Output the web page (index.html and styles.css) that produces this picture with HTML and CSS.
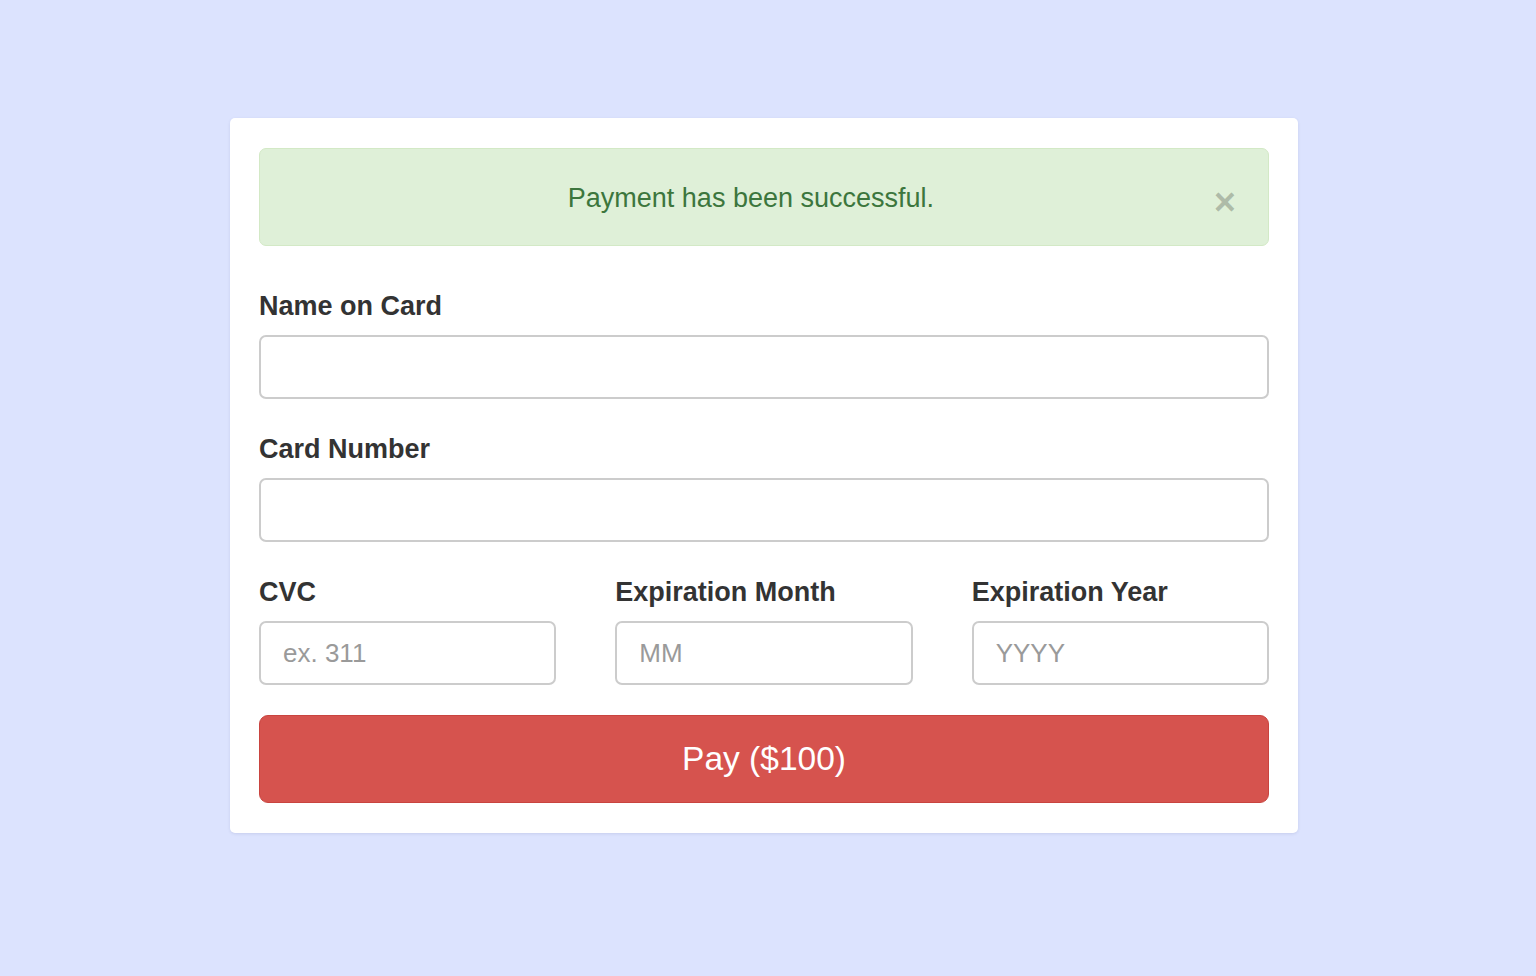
FILE: index.html
```html
<!DOCTYPE html>
<html lang="en">
<head>
<meta charset="utf-8">
<title>Payment</title>
<link rel="stylesheet" href="styles.css">
</head>
<body>
<div class="page">
  <div class="card">
    <div class="alert">
      <span class="alert-text">Payment has been successful.</span>
      <span class="close">×</span>
    </div>
    <form class="form">
      <div class="group">
        <label class="label">Name on Card</label>
        <input class="input" type="text">
      </div>
      <div class="group">
        <label class="label">Card Number</label>
        <input class="input" type="text">
      </div>
      <div class="row">
        <div class="col">
          <label class="label">CVC</label>
          <input class="input" type="text" placeholder="ex. 311">
        </div>
        <div class="col">
          <label class="label">Expiration Month</label>
          <input class="input" type="text" placeholder="MM">
        </div>
        <div class="col">
          <label class="label">Expiration Year</label>
          <input class="input" type="text" placeholder="YYYY">
        </div>
      </div>
      <button class="pay" type="button">Pay ($100)</button>
    </form>
  </div>
</div>
</body>
</html>
```

FILE: styles.css
```css
html, body {
  margin: 0;
  padding: 0;
  background: #dce3fe;
  font-family: "Liberation Sans", Arial, sans-serif;
}
.page {
  padding: 118px 0 0 230px;
  min-height: 976px;
  box-sizing: border-box;
}
.card {
  width: 1068px;
  box-sizing: border-box;
  background: #ffffff;
  border-radius: 5px;
  box-shadow: 0 1px 3px rgba(80, 90, 140, 0.15);
  padding: 30px 29px 30px 29px;
}
.alert {
  height: 98px;
  box-sizing: border-box;
  background: #dff0d8;
  border: 1px solid #d3e9c6;
  border-radius: 7px;
  display: flex;
  align-items: center;
  padding: 0 28px 0 28px;
  margin-bottom: 41px;
}
.alert-text {
  flex: 1;
  text-align: center;
  color: #3c763d;
  font-size: 27px;
  margin-top: 2px;
}
.close {
  font-size: 38px;
  font-weight: bold;
  color: rgba(0, 0, 0, 0.22);
  line-height: 1;
  margin-top: 9px;
  margin-right: 4px;
}
.form {
  display: flex;
  flex-direction: column;
}
.group {
  display: flex;
  flex-direction: column;
  margin-bottom: 31px;
}
.label {
  font-size: 27px;
  font-weight: bold;
  color: #333333;
  line-height: 36px;
  padding-top: 1px;
  margin-bottom: 11px;
}
.input {
  height: 64px;
  box-sizing: border-box;
  border: 2px solid #cccccc;
  border-radius: 7px;
  padding: 0 22px;
  font-family: "Liberation Sans", Arial, sans-serif;
  font-size: 26px;
  color: #555555;
  background: #ffffff;
  outline: none;
  width: 100%;
}
.input::placeholder {
  color: #9a9a9a;
}
.row {
  display: grid;
  grid-template-columns: repeat(3, 1fr);
  column-gap: 59px;
  margin-bottom: 30px;
}
.col {
  display: flex;
  flex-direction: column;
}
.pay {
  height: 88px;
  border: 1px solid #c9443f;
  border-radius: 9px;
  background: #d6534e;
  color: #ffffff;
  font-family: "Liberation Sans", Arial, sans-serif;
  font-size: 33.5px;
  cursor: pointer;
  padding: 0;
}
```
